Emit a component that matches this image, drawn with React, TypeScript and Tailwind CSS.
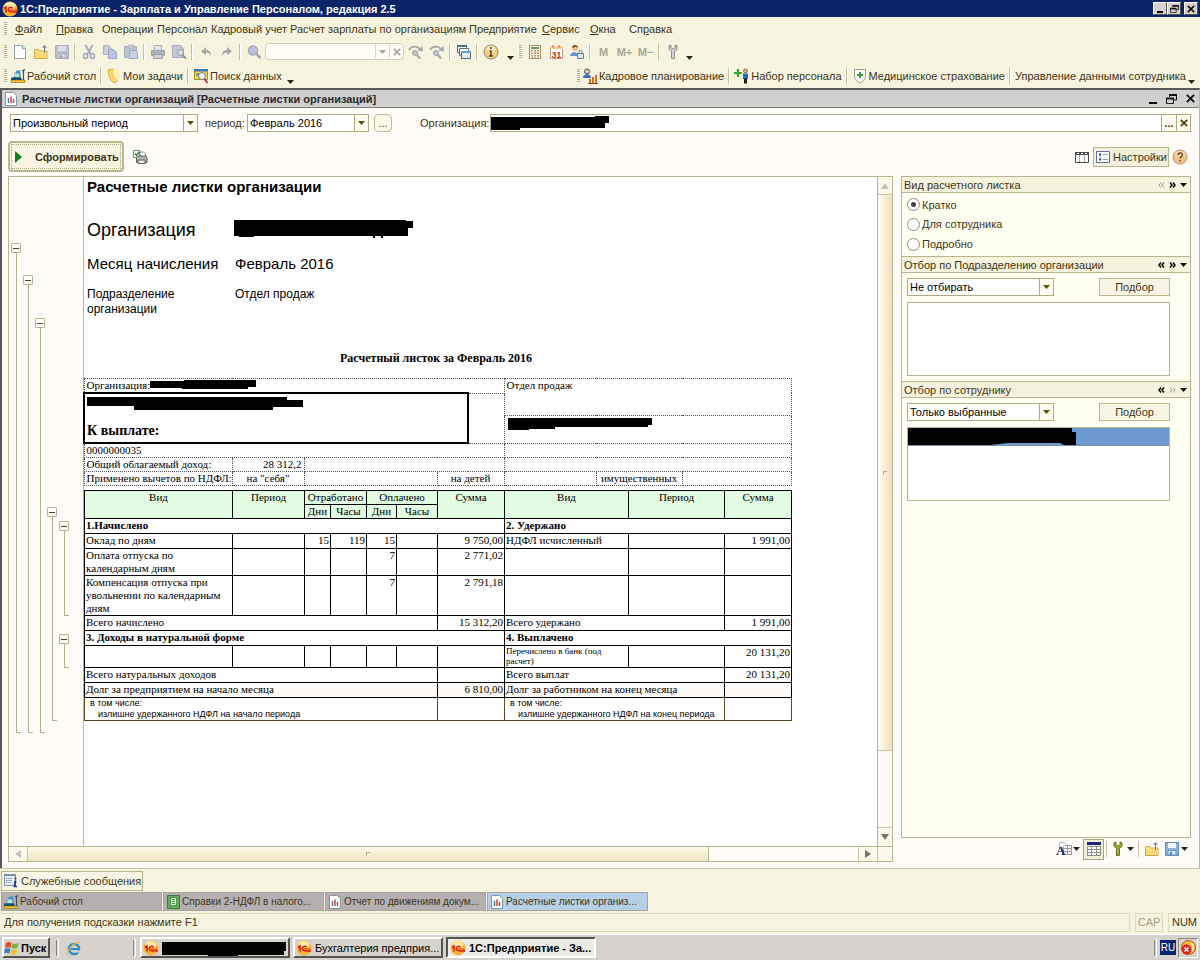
import type { ReactNode } from 'react'
import { useState } from 'react'

const UI = "font-['Liberation_Sans',sans-serif] text-[11px] leading-[14px]"

/* ---------- Small drawings ---------- */

function Svg({ children, w = 16, h = 16 }: { children: ReactNode; w?: number; h?: number }) {
  return (
    <svg width={w} height={h} viewBox={`0 0 ${w} ${h}`} fill="none" className="shrink-0" aria-hidden="true">
      {children}
    </svg>
  )
}

const Logo1C = () => (
  <Svg>
    <circle cx="8" cy="8" r="7.5" fill="#fbb03a" />
    <ellipse cx="8" cy="4.5" rx="5.5" ry="3.5" fill="#ffe9a8" />
    <path d="M2 7.500 4 6v5.500" stroke="#d8230f" strokeWidth="1.600" />
    <path d="M10.500 7.200C9 5.600 6.300 6.300 6.300 8.600c0 2.400 2.200 2.400 4 2.400H15" stroke="#d8230f" strokeWidth="1.500" />
    <path d="M10.300 8.400c-.8-.7-2-.2-1.800.5.100.5.800.4 6.500.4" stroke="#d8230f" strokeWidth=".8" />
  </Svg>
)

const NewDoc = () => (
  <Svg>
    <path d="M2.500 1.500h8l3 3v10h-11z" fill="#fff" stroke="#8fa3b0" />
    <path d="M10.500 1.500v3h3" fill="#dfe9f2" stroke="#8fa3b0" />
  </Svg>
)

const OpenFolder = () => (
  <Svg>
    <path d="M1.500 5.500h4l1 1.500h7.500v7.500h-12.500z" fill="#fbe18a" stroke="#d2a84a" />
    <path d="M2 9h12v5H2z" fill="#f9d774" />
    <path d="M11.500 9V2M9.500 4l2-2.500 2 2.500" stroke="#6f7a86" />
  </Svg>
)

const Floppy = ({ dim }: { dim?: boolean }) => (
  <Svg>
    <path d="M1.500 1.500h13v13h-13z" fill={dim ? '#b9c1d2' : '#8cb3da'} stroke={dim ? '#aab2c2' : '#5f8cb8'} />
    <path d="M4 2h8v5H4z" fill={dim ? '#dcdfe3' : '#eef6fc'} />
    <path d="M4 9.500h8V14H4z" fill={dim ? '#cfd5de' : '#d6e6f4'} stroke={dim ? '#a3acbd' : '#6991ba'} />
    <path d="M6 11h2v3H6z" fill={dim ? '#98a3b8' : '#4e7ba8'} />
  </Svg>
)

const Cut = () => (
  <Svg>
    <path d="M4.500 1 9.500 10M11.500 1 6.500 10" stroke="#a2aabc" strokeWidth="1.800" />
    <ellipse cx="4.500" cy="12" rx="2" ry="2.500" stroke="#a2aabc" strokeWidth="1.600" />
    <ellipse cx="11.500" cy="12" rx="2" ry="2.500" stroke="#a2aabc" strokeWidth="1.600" />
  </Svg>
)

const Copy = () => (
  <Svg>
    <path d="M1.500 1.500h5l3 3v6h-8z" fill="#c6cde0" stroke="#a8b0c6" />
    <path d="M6.500 5.500h5l3 3v6h-8z" fill="#bcc5dc" stroke="#9aa5c0" />
  </Svg>
)

const Paste = () => (
  <Svg>
    <path d="M1.500 2.500h12v11h-12z" fill="#bcc3cf" stroke="#a4acba" />
    <path d="M5 1h5v3H5z" fill="#d5d9df" stroke="#a4acba" />
    <path d="M6.500 6.500h6l2 2v6h-8z" fill="#c8d0e2" stroke="#a0a9be" />
  </Svg>
)

const Printer = () => (
  <Svg>
    <path d="M4.500 1.500h7v5h-7z" fill="#e7e7e7" stroke="#a9abb2" />
    <path d="M1.500 6.500h13v5h-13z" fill="#b0b3bb" stroke="#9c9fa6" />
    <path d="M3.500 10.500h9v4h-9z" fill="#d0d2d6" stroke="#9c9fa6" />
  </Svg>
)

const Preview = () => (
  <Svg>
    <path d="M1.500 1.500h8l3 3v9h-11z" fill="#c4c9d6" stroke="#a3a9b8" />
    <circle cx="9.500" cy="8.500" r="3" fill="#d9dde8" stroke="#8d94a6" />
    <path d="m11.500 11 3.500 3.500" stroke="#8d94a6" strokeWidth="1.800" />
  </Svg>
)

const Arrow = ({ flip }: { flip?: boolean }) => (
  <Svg>
    <path
      d={flip ? 'M3 12c0-4 2-6 5-6V3l5 4.500L8 11V8.500C6 8.500 4 9.500 3 12z' : 'M13 12c0-4-2-6-5-6V3L3 7.500 8 11V8.500c2 0 4 1 5 3.500z'}
      fill="#a3a6a4"
    />
  </Svg>
)

const Lens = () => (
  <Svg>
    <circle cx="7" cy="6.500" r="4.500" fill="#b9c2da" stroke="#a4a9b8" strokeWidth="1.500" />
    <path d="m10.500 10 4 4" stroke="#aaa8a8" strokeWidth="2.500" />
  </Svg>
)

// curved arrow over a magnifier
const FindNext = () => (
  <Svg>
    <path d="M1 6c2.500-4.500 8.500-4.500 11.500 0" stroke="#a8abab" strokeWidth="1.800" />
    <path d="m9.500 6.500 5.500 1-.5-5.500z" fill="#a8abab" />
    <circle cx="7" cy="9" r="2.500" fill="#c1c6d0" stroke="#a0a4ad" />
    <path d="m9 11 3 3.500" stroke="#a0a4ad" strokeWidth="2" />
  </Svg>
)

const Windows = () => (
  <Svg>
    <path d="M1.500 1.500h9v7h-9z" fill="#fff" stroke="#4c7184" />
    <path d="M1 1h10v2H1z" fill="#4c7184" />
    <path d="M3.500 4.500h9v7h-9z" fill="#fff" stroke="#4c7184" />
    <path d="M5.500 7.500h9v7h-9z" fill="#d7ecf7" stroke="#4c7184" />
    <path d="M5 7h10v2H5z" fill="#6ba4c2" />
  </Svg>
)

const Info = () => (
  <Svg>
    <circle cx="8" cy="8" r="7" fill="#f3cf78" stroke="#8d8a80" />
    <ellipse cx="8" cy="5" rx="4.500" ry="3" fill="#fbe9b4" />
    <path d="M8 3v2M6.500 7H8v5M6 12h4" stroke="#4b4a44" strokeWidth="1.500" />
  </Svg>
)

const Calc = () => (
  <Svg>
    <path d="M2.500 1.500h11v13h-11z" fill="#fdf6df" stroke="#a88c63" />
    <path d="M4 3h8v2H4z" fill="#5da05b" />
    <path d="M5 6v8M8 6v8" stroke="#8e7f6a" strokeWidth="1.500" strokeDasharray="1.500 1" />
    <path d="M11 6v8" stroke="#c75b3f" strokeWidth="1.500" strokeDasharray="1.500 1" />
  </Svg>
)

const Calendar = () => (
  <Svg>
    <path d="M2.500 2.500h12v12h-12z" fill="#fff" stroke="#b5a183" />
    <path d="M2 2h13v3H2z" fill="#eccf9f" />
    <path d="M5 1v3M11 1v3" stroke="#d06a44" />
    <text x="3.500" y="13.500" fontSize="9" fontWeight="700" fontFamily="Liberation Sans" fill="#d2331d">31</text>
  </Svg>
)

const UserLock = () => (
  <Svg>
    <circle cx="6" cy="4" r="3" fill="#eebd8d" />
    <path d="M3 4c0-4 6-4 6 0L7 2.500z" fill="#7c4a25" />
    <path d="M1 12c0-5 9-5 9 0z" fill="#5f93c9" />
    <path d="M8.500 9.500h6v5h-6z" fill="#dbe7f2" stroke="#5a7d9e" />
    <path d="M10 9V7.500c0-1.500 3-1.500 3 0V9" stroke="#5a7d9e" />
  </Svg>
)

const Wrench = ({ green }: { green?: boolean }) => (
  <Svg>
    <path
      d="M4 1.500v4L6.500 7v7.500h3V7L12 5.500v-4L10 1v3L8 5 6 4V1z"
      fill={green ? '#a3ad3c' : '#d4d4d4'}
      stroke={green ? '#6c7524' : '#8f9092'}
    />
  </Svg>
)

const Desk = () => (
  <Svg>
    <path d="M1 12h14v2.500H1z" fill="#f2c230" stroke="#8a6a1a" strokeWidth=".6" />
    <path d="m6 3 4-1 1 8H3z" fill="#3b93c4" />
    <path d="M1 9.500h10l1 2.500H1z" fill="#1c4d6c" />
    <path d="M5 5.500h4l.5 3.500H4z" fill="#bfe3d0" />
    <path d="M13.500 2v10M12 3l3-1.500" stroke="#3d4c59" strokeWidth="1.200" />
  </Svg>
)

const Note = () => (
  <Svg>
    <path d="m2.500 1.500 5-.5c-1 5 0 8 4.500 12l-4 2C3.500 12 2 7 2.500 1.500z" fill="#fbd867" stroke="#caa13a" strokeWidth=".7" />
    <path d="m7.500 1 6 .5c-1 4-.5 7 .5 10.500l-2 1C7.500 9 6.500 6 7.500 1z" fill="#fff0b0" />
  </Svg>
)

const SearchData = () => (
  <Svg>
    <path d="M1.500 1.500h13v10h-13z" fill="#f8d44a" stroke="#b58a1f" />
    <path d="M1 1h14v2.500H1z" fill="#3b79b9" />
    <path d="M3 5h4v3H3z" fill="#6db055" />
    <circle cx="9" cy="8" r="3.500" fill="#e8f4fb" stroke="#5c87a8" />
    <path d="m11.500 11 3 4" stroke="#c4372c" strokeWidth="2" />
  </Svg>
)

const StaffPlan = () => (
  <Svg>
    <circle cx="5" cy="3.500" r="2.500" fill="#f1c9a4" stroke="#2c4a7e" />
    <path d="M1 10c0-5 8-5 8 0z" fill="#3f6dba" />
    <path d="M7 15v-4h2v4zM10 15V9h2v6zM13 15V7h2v8z" fill="#e2711d" />
    <path d="M6 15.500h10" stroke="#8d3d0f" />
  </Svg>
)

const Recruit = () => (
  <Svg>
    <path d="M4 1v8M0 5h8" stroke="#35a52b" strokeWidth="2.200" />
    <circle cx="11.500" cy="3" r="2" fill="#e7b58c" stroke="#503013" strokeWidth=".6" />
    <path d="M9 5.500h5V11H9z" fill="#2169c9" />
    <path d="M10 10.500h3v5h-3z" fill="#2d1a12" />
  </Svg>
)

const Shield = () => (
  <Svg>
    <path d="M2.500 1.500h11V8c0 4-3 5.500-5.500 7C5.500 13.500 2.500 12 2.500 8z" fill="#f8fbf4" stroke="#9aa692" />
    <path d="M8 4v6M5 7h6" stroke="#3a9a3f" strokeWidth="2" />
  </Svg>
)

const Report = () => (
  <Svg>
    <path d="M2.500 1.500h8l3 3v10h-11z" fill="#fff" stroke="#7f97ad" />
    <path d="M5.500 12V7" stroke="#3f7fbf" strokeWidth="1.500" />
    <path d="M8 12V5.500" stroke="#cf4028" strokeWidth="1.500" />
    <path d="M10.500 12V8" stroke="#cf4028" strokeWidth="1.500" />
  </Svg>
)

const Book = () => (
  <Svg>
    <path d="M2.500 1.500h12v13h-12z" fill="#5fae55" stroke="#39783a" />
    <path d="M5.500 3.500h6v8h-6z" fill="#d9efcf" stroke="#39783a" strokeWidth=".7" />
    <path d="M7 5.500h3M7 7.500h3M7 9.500h3" stroke="#4a9346" />
  </Svg>
)

const PrintCheck = () => (
  <Svg>
    <path d="M1.500 1.500h6v7h-6z" fill="#fff" stroke="#5a9a5a" />
    <path d="m3 4.500 1.500 2L7 3" stroke="#1d8a2b" strokeWidth="1.300" />
    <path d="M8 3h3.500l2 2v3H8z" fill="#fff" stroke="#8a8a8a" />
    <path d="M4.500 8.500 6 7h8l1 2v4.500H4.500z" fill="#b5b5b5" stroke="#5e5e5e" />
    <path d="M6 11h7v3.500H6z" fill="#ececec" stroke="#5e5e5e" />
    <path d="M12 9.500h2" stroke="#c9a93a" />
  </Svg>
)

const GridIcon = () => (
  <Svg>
    <path d="M1.500 3.500h13v10h-13z" fill="#fff" stroke="#4a4a4a" />
    <path d="M1 3h14v3H1z" fill="#4a4a4a" />
    <path d="M3 4.500h2M7 4.500h2M11 4.500h2" stroke="#fff" />
    <path d="M5.500 6v7M10.500 6v7" stroke="#a9a9a9" />
  </Svg>
)

const Settings = () => (
  <Svg>
    <path d="M1.500 2.500h13v11h-13z" fill="#fff" stroke="#5f6f9c" />
    <path d="M4 5.500h2M4 10.500h2" stroke="#223c9c" strokeWidth="2" />
    <path d="M7.500 5.500H13M7.500 10.500H13M5 6v4" stroke="#8fa0c8" />
  </Svg>
)

const Help = () => (
  <Svg>
    <circle cx="8" cy="8" r="7" fill="#f6c089" stroke="#b59678" />
    <ellipse cx="8" cy="5" rx="5" ry="3" fill="#fde3c4" />
    <path d="M5.800 6.200c0-3 4.600-2.800 4.600-.2C10.400 7.600 8 7.700 8 9.500M8 11v1.700" stroke="#7b3d17" strokeWidth="1.400" />
  </Svg>
)

const FontTable = () => (
  <Svg>
    <path d="M7.500 4.500h8v9h-8z" fill="#fff" stroke="#9a9a9a" />
    <path d="M7.500 7.500h8M7.500 10.500h8M11.500 4.500v9" stroke="#9a9a9a" />
    <path d="M3.500 8V1.500h5l2 2" fill="#fff" stroke="#b9b9b9" />
    <text x="0" y="14" fontSize="13" fontWeight="700" fontFamily="Liberation Serif" fill="#10226f">A</text>
  </Svg>
)

const TableIcon = () => (
  <Svg>
    <path d="M1 1h14v3H1z" fill="#1b2a7c" />
    <path d="M1.500 5.500h13v9h-13z" fill="#fff" stroke="#8c8c86" />
    <path d="M1.500 8.500h13M1.500 11.500h13M5.500 5.500v9M10.500 5.500v9" stroke="#8c8c86" />
  </Svg>
)

const Messages = () => (
  <Svg>
    <path d="M1.500 1.500h11v11h-11z" fill="#e9f0f7" stroke="#7d93aa" />
    <path d="M1 1h12v2H1z" fill="#7d93aa" />
    <path d="M3 5.500h6M3 7.500h6M3 9.500h5" stroke="#9bb0c6" />
    <path d="M12.500 4.500v2M11 8.500h1.500l-1 5h2.500" stroke="#22359a" strokeWidth="1.700" />
  </Svg>
)

const Flag = () => (
  <Svg>
    <path d="M2 3c2-1.500 4-1 5.500 0L6.500 8C5 7 3 7 1 8z" fill="#e4502a" />
    <path d="M8.500 3.300c2 1 3.500 1 6-.3l-1 5c-2.500 1-4 1-6 0z" fill="#7db33c" />
    <path d="M.8 9c2-1 4-1 5.500 0l-1 4.500c-2-1-3.500-1-5.300 0z" fill="#3d77cf" />
    <path d="M7.300 9.300c2 1 3.500 1 6 0l-1 4.700c-2 1-4 1-6 0z" fill="#f4c22d" />
  </Svg>
)

const Explorer = () => (
  <Svg>
    <circle cx="8" cy="9" r="5" stroke="#2e8fd6" strokeWidth="2.600" />
    <path d="M4 9h9" stroke="#2e8fd6" strokeWidth="2" />
    <path d="M9 10.500h6v2H9z" fill="#d6d3ce" />
    <path d="M2 14.500C-1 12 8 1.500 14.500 2.500" stroke="#edb72c" strokeWidth="1.400" />
  </Svg>
)

const TrayAlert = () => (
  <Svg>
    <circle cx="8.500" cy="7.500" r="7" fill="#f6b83a" stroke="#c8452a" />
    <path d="M11 3a6 6 0 0 1 1 8" stroke="#fff3b5" strokeWidth="2" />
    <circle cx="6.500" cy="9.500" r="5" fill="#dd2518" />
    <path d="m4.500 7.500 4 4M8.500 7.500l-4 4" stroke="#fff" strokeWidth="1.500" />
  </Svg>
)

const Down = ({ color = '#2d2510' }: { color?: string }) => (
  <Svg w={7} h={4}>
    <path d="M0 0h7L3.500 4z" fill={color} />
  </Svg>
)

const Chevrons = ({ flip, dim }: { flip?: boolean; dim?: boolean }) => (
  <Svg w={7} h={6}>
    <path
      d={flip ? 'm1 .5 2 2.500-2 2.500M4 .5 6 3 4 5.500' : 'M3 .5 1 3l2 2.500M6 .5 4 3l2 2.500'}
      stroke={dim ? '#9c9a86' : '#111'}
      strokeWidth={dim ? 1 : 1.6}
    />
  </Svg>
)

const Cross = ({ color = '#111', size = 8 }: { color?: string; size?: number }) => (
  <svg width={size} height={size} viewBox="0 0 8 8" aria-hidden="true">
    <path d="m.8.8 6.400 6.400M7.200.8.8 7.200" stroke={color} strokeWidth="1.700" />
  </svg>
)

const Restore = ({ small }: { small?: boolean }) => (
  <svg width={small ? 9 : 11} height={small ? 8 : 10} viewBox="0 0 11 10" fill="none" className="shrink-0" aria-hidden="true">
    <path d="M3.500 3V1h7v5H8" stroke="#111" />
    <path d="M3 1h8" stroke="#111" strokeWidth="2" />
    <path d="M.5 4.500h7v5h-7z" stroke="#111" />
    <path d="M0 4.500h8" stroke="#111" strokeWidth="2" />
  </svg>
)

/* painted-over text */
function Redacted({ w, h, d }: { w: number; h: number; d: string }) {
  return (
    <Svg w={w} h={h}>
      <path d={d} fill="#000" />
    </Svg>
  )
}

/* ---------- Controls ---------- */

const Sep = () => <span className="mx-[2px] h-4 w-[2px] shrink-0 border-l border-[#c5c1a2] bg-white" />

const Grip = () => (
  <span className="h-3.5 w-[3px] shrink-0 bg-[repeating-linear-gradient(to_bottom,#b5b193_0_1px,transparent_1px_2px)]" />
)

function ToolButton({ label, children }: { label: string; children: ReactNode }) {
  return (
    <button type="button" aria-label={label} className="flex h-5 w-[21px] shrink-0 items-center justify-center font-bold text-[#a8a698]">
      {children}
    </button>
  )
}

function LinkButton({ icon, label }: { icon?: ReactNode; label: string }) {
  return (
    <button type="button" className="flex h-5 shrink-0 items-center gap-px px-[2px] whitespace-nowrap">
      {icon}
      {label}
    </button>
  )
}

function Combo({ label, value, className }: { label: string; value: string; className: string }) {
  return (
    <div className={`relative h-[18px] shrink-0 border border-[#b0ab83] bg-white ${className}`}>
      <select aria-label={label} className="block h-full w-full appearance-none bg-transparent pl-[2px] text-black outline-none">
        <option>{value}</option>
      </select>
      <span className="pointer-events-none absolute inset-y-0 right-0 flex w-[14px] items-center justify-center border-l border-[#b0ab83] bg-[#fffcf0]">
        <Down color="#5d4b12" />
      </span>
    </div>
  )
}

function Section({ title, back, next, children }: { title: string; back: boolean; next: boolean; children: ReactNode }) {
  return (
    <section>
      <header className="flex h-[16px] items-center border-b border-[#b9b591] bg-[#f5f2de] pr-[3px] pl-[2px]">
        <h2 className="grow">{title}</h2>
        <div className="flex items-center gap-[4px]">
          <button type="button" aria-label="Назад"><Chevrons dim={!back} /></button>
          <button type="button" aria-label="Вперед"><Chevrons flip dim={!next} /></button>
          <button type="button" aria-label="Меню"><Down color="#111" /></button>
        </div>
      </header>
      {children}
    </section>
  )
}

/* ---------- Data ---------- */

const menu = [
  { key: 'Ф', rest: 'айл', width: 'w-[41px]' },
  { key: 'П', rest: 'равка', width: 'w-[46px]' },
  { pre: 'Операции', width: 'w-[55px]' },
  { pre: 'Персонал', width: 'w-[54px]' },
  { pre: 'Кадровый учет', width: 'w-[79px]' },
  { pre: 'Расчет зарплаты по организациям', width: 'w-[179px]' },
  { pre: 'Предприятие', width: 'w-[73px]' },
  { key: 'С', rest: 'ервис', width: 'w-[48px]' },
  { key: 'О', rest: 'кна', width: 'w-[39px]' },
  { pre: 'Сп', key: 'р', rest: 'авка', width: 'w-[48px]' },
]

// outline levels at the left of the sheet
const outline = [
  { groups: [{ gap: 'h-[66px]', line: 'h-[480px]' }] },
  { groups: [{ gap: 'h-[98px]', line: 'h-[448px]' }] },
  { groups: [{ gap: 'h-[141px]', line: 'h-[405px]' }] },
  { groups: [{ gap: 'h-[330px]', line: 'h-[204px]' }] },
  { groups: [{ gap: 'h-[344px]', line: 'h-[85px]' }, { gap: 'h-[18px]', line: 'h-[24px]' }] },
]

const accruals = [
  { kind: 'Оклад по дням', worked: '15', hours: '119', paid: '15', sum: '9 750,00', held: 'НДФЛ исчисленный', heldSum: '1 991,00', height: 'h-[15px]' },
  { kind: 'Оплата отпуска по календарным дням', worked: '', hours: '', paid: '7', sum: '2 771,02', held: '', heldSum: '', height: 'h-[27px]' },
  { kind: 'Компенсация отпуска при увольнении по календарным дням', worked: '', hours: '', paid: '7', sum: '2 791,18', held: '', heldSum: '', height: 'h-[40px]' },
]

const windowTabs = [
  { icon: <Desk />, label: 'Рабочий стол' },
  { icon: <Book />, label: 'Справки 2-НДФЛ в налого...' },
  { icon: <Report />, label: 'Отчет по движениям докум...' },
  { icon: <Report />, label: 'Расчетные листки организ...' },
]

const payTypes = ['Кратко', 'Для сотрудника', 'Подробно']

/* ---------- Parts ---------- */

function TitleBar() {
  const box = 'flex h-[13px] w-[14px] items-center justify-center border border-t-white border-l-white border-r-[#55534f] border-b-[#55534f] bg-[#d6d3ce]'
  return (
    <header className="flex h-[17px] items-center bg-[#0a246a] pr-[2px] pl-[2px] text-white">
      <Logo1C />
      <h1 className="ml-[2px] grow font-bold">1С:Предприятие - Зарплата и Управление Персоналом, редакция 2.5</h1>
      <button type="button" aria-label="Свернуть" className={box}>
        <span className="mt-[6px] h-[2px] w-[6px] bg-black" />
      </button>
      <button type="button" aria-label="Восстановить" className={box}><Restore small /></button>
      <button type="button" aria-label="Закрыть" className={`ml-[3px] ${box}`}><Cross /></button>
    </header>
  )
}

function Toolbars() {
  return (
    <div className="bg-[#f6f3de]">
      <nav className="flex h-[23px] items-center pl-1">
        <Grip />
        <div className="flex pl-2">
          {menu.map((m) => (
            <button type="button" key={(m.pre ?? '') + (m.rest ?? '')} className={`shrink-0 text-left whitespace-nowrap ${m.width}`}>
              {m.pre}
              {m.key && <u>{m.key}</u>}
              {m.rest}
            </button>
          ))}
        </div>
      </nav>

      <div className="flex h-[23px] items-center pl-1">
        <Grip />
        <div className="flex items-center pl-[2px]">
          <ToolButton label="Новый"><NewDoc /></ToolButton>
          <ToolButton label="Открыть"><OpenFolder /></ToolButton>
          <ToolButton label="Сохранить"><Floppy dim /></ToolButton>
          <Sep />
          <ToolButton label="Вырезать"><Cut /></ToolButton>
          <ToolButton label="Копировать"><Copy /></ToolButton>
          <ToolButton label="Вставить"><Paste /></ToolButton>
          <Sep />
          <ToolButton label="Печать"><Printer /></ToolButton>
          <ToolButton label="Просмотр"><Preview /></ToolButton>
          <Sep />
          <ToolButton label="Отменить"><Arrow /></ToolButton>
          <ToolButton label="Вернуть"><Arrow flip /></ToolButton>
          <Sep />
          <ToolButton label="Найти"><Lens /></ToolButton>
          <div className="mx-[1px] flex h-[17px] w-[139px] rounded-sm border border-[#d2ceb2] bg-[#fffdf5]">
            <input aria-label="Поиск" className="min-w-0 grow bg-transparent px-1 outline-none" />
            <button type="button" aria-label="История поиска" className="flex w-[14px] shrink-0 items-center justify-center border-l border-[#dedbc4]">
              <Down color="#a8a593" />
            </button>
            <button type="button" aria-label="Очистить" className="flex w-[14px] shrink-0 items-center justify-center border-l border-[#dedbc4]">
              <Cross color="#a8a593" />
            </button>
          </div>
          <ToolButton label="Найти далее"><FindNext /></ToolButton>
          <ToolButton label="Найти ранее"><FindNext /></ToolButton>
          <Sep />
          <ToolButton label="Окна"><Windows /></ToolButton>
          <Sep />
          <ToolButton label="Справка"><Info /></ToolButton>
          <button type="button" aria-label="Еще" className="flex h-4 w-[18px] items-end justify-center"><Down /></button>
        </div>
        <Grip />
        <div className="flex items-center pl-[2px]">
          <ToolButton label="Калькулятор"><Calc /></ToolButton>
          <ToolButton label="Календарь"><Calendar /></ToolButton>
          <ToolButton label="Пользователи"><UserLock /></ToolButton>
          <Sep />
          <ToolButton label="Запомнить">M</ToolButton>
          <ToolButton label="Прибавить">M+</ToolButton>
          <ToolButton label="Вычесть">M−</ToolButton>
          <Sep />
          <ToolButton label="Сервис"><Wrench /></ToolButton>
          <button type="button" aria-label="Еще" className="flex h-4 w-[13px] items-end justify-center"><Down /></button>
        </div>
      </div>

      <div className="flex h-[25px] items-center pr-[5px] pl-1">
        <Grip />
        <div className="flex items-center pl-px">
          <LinkButton icon={<Desk />} label="Рабочий стол" />
          <Sep />
          <LinkButton icon={<Note />} label="Мои задачи" />
          <Sep />
          <LinkButton icon={<SearchData />} label="Поиск данных" />
          <button type="button" aria-label="Еще" className="flex h-4 w-[13px] items-end justify-center"><Down /></button>
        </div>
        <div className="ml-auto flex items-center">
          <Grip />
          <LinkButton icon={<StaffPlan />} label="Кадровое планирование" />
          <Sep />
          <LinkButton icon={<Recruit />} label="Набор персонала" />
          <Sep />
          <LinkButton icon={<Shield />} label="Медицинское страхование" />
          <Sep />
          <LinkButton label="Управление данными сотрудника" />
          <button type="button" aria-label="Еще" className="flex h-4 items-end"><Down /></button>
        </div>
      </div>
    </div>
  )
}

function Filters() {
  return (
    <div className="pr-[2px]">
      <div className="flex h-[18px] items-center">
        <Combo label="Вид периода" value="Произвольный период" className="ml-[2px] w-[188px]" />
        <span className="ml-[7px] w-[42px]">период:</span>
        <Combo label="Период" value="Февраль 2016" className="w-[122px]" />
        <button type="button" aria-label="Выбрать период" className="ml-[5px] h-[18px] w-[18px] rounded-sm border border-[#c0bb98] bg-[#fbf8ea]">...</button>
        <label htmlFor="org" className="ml-7 w-[70px]">Организация:</label>
        <div className="flex h-[18px] grow items-center border border-[#b0ab83] bg-white">
          <Redacted w={118} h={16} d="M0 2h104V1h14v7h-4v5H29v2H0z" />
          <input id="org" className="min-w-0 grow px-1 outline-none" />
          <button type="button" aria-label="Выбрать организацию" className="h-full w-[15px] border-l border-[#b0ab83] bg-[#fffcf0] font-bold">...</button>
          <button type="button" aria-label="Очистить" className="flex h-full w-[14px] items-center justify-center border-l border-[#b0ab83] bg-[#fffcf0]">
            <Cross color="#4d3f10" />
          </button>
        </div>
      </div>
      <div className="mt-[9px] flex h-[31px] items-center">
        <button type="button" className="flex h-[31px] w-[116px] items-center gap-[13px] rounded-sm border-2 border-[#bcb78f] bg-[#f7f4e2] pl-[5px] font-bold outline-1 -outline-offset-4 outline-dotted outline-[#a9a47c]">
          <Svg w={7} h={12}><path d="M0 0v12l7-6z" fill="#1d7d1d" /></Svg>
          Сформировать
        </button>
        <button type="button" aria-label="Печать" className="ml-2"><PrintCheck /></button>
        <button type="button" aria-label="Таблица" className="ml-auto"><GridIcon /></button>
        <button type="button" className="ml-[3px] flex h-5 w-[76px] items-center justify-center gap-[2px] border border-[#b9b48c] bg-[#f5f0dc]">
          <Settings />
          Настройки
        </button>
        <button type="button" aria-label="Справка" className="mx-[3px]"><Help /></button>
      </div>
    </div>
  )
}

function Outline() {
  return (
    <div className="flex w-[75px] shrink-0 gap-[2px] border-r border-[#b9b591] pl-[2px]">
      {outline.map((level, i) => (
        <div key={i} className="flex w-[10px] flex-col items-center">
          {level.groups.map((g) => (
            <div key={g.gap} className="flex flex-col items-center">
              <span className={g.gap} />
              <button type="button" aria-label="Свернуть группу" className="flex h-[10px] w-[10px] items-center justify-center rounded-[1px] border border-[#b5b193] bg-[#fffdf5]">
                <span className="h-px w-[6px] bg-[#4a4528]" />
              </button>
              <span className={`ml-[5px] w-[5px] border-b border-l border-[#b5b193] ${g.line}`} />
            </div>
          ))}
        </div>
      ))}
    </div>
  )
}

function HeaderTable() {
  return (
    <table className="-ml-px w-[708px] table-fixed border-collapse border border-dotted border-[#555] text-left [&_td]:border [&_td]:border-dotted [&_td]:border-[#555] [&_td]:px-[2px] [&_td]:align-top">
      <colgroup>
        <col className="w-[148px]" />
        <col className="w-[72px]" />
        <col className="w-[133px]" />
        <col className="w-[31px]" />
        <col className="w-[36px]" />
        <col className="w-[92px]" />
        <col className="w-[86px]" />
        <col className="w-[109px]" />
      </colgroup>
      <tbody>
        <tr className="h-[14px]">
          <td colSpan={5}>
            <div className="flex">
              Организация:
              <Redacted w={106} h={11} d="M0 2h34v-1h72v7h-8v2H32v-1H0z" />
            </div>
          </td>
          <td colSpan={3} rowSpan={2}>Отдел продаж</td>
        </tr>
        <tr className="h-[22px]">
          <td colSpan={4} rowSpan={2} className="border-2! border-solid! border-black!">
            <Redacted w={216} h={16} d="M0 3h200v3h16v7h-30v3H47v-4H0z" />
            <div className="mt-[12px] text-[14px] leading-[18px] font-bold">К выплате:</div>
          </td>
          <td rowSpan={2} />
        </tr>
        <tr className="h-[28px]">
          <td colSpan={3}>
            <Redacted w={146} h={14} d="M1 2h144v7h-4v2H48v2H22v2H1z" />
          </td>
        </tr>
        <tr className="h-[14px]">
          <td colSpan={5}>0000000035</td>
          <td colSpan={3} />
        </tr>
        <tr className="h-[14px]">
          <td>Общий облагаемый доход:</td>
          <td className="text-right">28 312,2</td>
          <td colSpan={3} />
          <td colSpan={3} />
        </tr>
        <tr className="h-[14px]">
          <td className="whitespace-nowrap">Применено вычетов по НДФЛ:</td>
          <td className="text-center">на "себя"</td>
          <td />
          <td colSpan={2} className="text-center">на детей</td>
          <td />
          <td className="text-center">имущественных</td>
          <td />
        </tr>
      </tbody>
    </table>
  )
}

function PayTable() {
  return (
    <table className="mt-[4px] w-[708px] table-fixed border-collapse border border-black text-left [&_td]:border [&_td]:border-black [&_td]:px-[1px] [&_td]:align-top [&_th]:border [&_th]:border-black [&_th]:bg-[#e2fce2] [&_th]:text-center [&_th]:align-top [&_th]:font-normal">
      <colgroup>
        <col className="w-[148px]" />
        <col className="w-[72px]" />
        <col className="w-[26px]" />
        <col className="w-[36px]" />
        <col className="w-[30px]" />
        <col className="w-[41px]" />
        <col className="w-[67px]" />
        <col className="w-[124px]" />
        <col className="w-[96px]" />
        <col className="w-[67px]" />
      </colgroup>
      <thead>
        <tr className="h-[14px]">
          <th rowSpan={2}>Вид</th>
          <th rowSpan={2}>Период</th>
          <th colSpan={2}>Отработано</th>
          <th colSpan={2}>Оплачено</th>
          <th rowSpan={2}>Сумма</th>
          <th rowSpan={2}>Вид</th>
          <th rowSpan={2}>Период</th>
          <th rowSpan={2}>Сумма</th>
        </tr>
        <tr className="h-[14px]">
          <th>Дни</th>
          <th>Часы</th>
          <th>Дни</th>
          <th>Часы</th>
        </tr>
      </thead>
      <tbody>
        <tr className="h-[15px] font-bold">
          <td colSpan={7}>1.Начислено</td>
          <td colSpan={3}>2. Удержано</td>
        </tr>
        {accruals.map((a) => (
          <tr key={a.kind} className={a.height}>
            <td>{a.kind}</td>
            <td />
            <td className="text-right">{a.worked}</td>
            <td className="text-right">{a.hours}</td>
            <td className="text-right">{a.paid}</td>
            <td />
            <td className="text-right">{a.sum}</td>
            <td>{a.held}</td>
            <td />
            <td className="text-right">{a.heldSum}</td>
          </tr>
        ))}
        <tr className="h-[15px]">
          <td colSpan={6}>Всего начислено</td>
          <td className="text-right">15 312,20</td>
          <td colSpan={2}>Всего удержано</td>
          <td className="text-right">1 991,00</td>
        </tr>
        <tr className="h-[15px] font-bold">
          <td colSpan={7}>3. Доходы в натуральной форме</td>
          <td colSpan={3}>4. Выплачено</td>
        </tr>
        <tr className="h-[22px]">
          <td />
          <td />
          <td />
          <td />
          <td />
          <td />
          <td />
          <td className="text-[9px] leading-[10px]">Перечислено в банк (под<br />расчет)</td>
          <td />
          <td className="text-right">20 131,20</td>
        </tr>
        <tr className="h-[15px]">
          <td colSpan={6}>Всего натуральных доходов</td>
          <td />
          <td colSpan={2}>Всего выплат</td>
          <td className="text-right">20 131,20</td>
        </tr>
        <tr className="h-[15px] bg-[#fcf9f6]">
          <td colSpan={6}>Долг за предприятием на начало месяца</td>
          <td className="text-right">6 810,00</td>
          <td colSpan={2}>Долг за работником на конец месяца</td>
          <td />
        </tr>
        <tr className="h-[23px] font-['Liberation_Sans',sans-serif] text-[9px] leading-[11px] [&_td]:border-[#5d4a20]!">
          <td colSpan={6}>
            <div className="pl-1">в том числе:</div>
            <div className="pl-3">излишне удержанного НДФЛ на начало периода</div>
          </td>
          <td />
          <td colSpan={2}>
            <div className="pl-1">в том числе:</div>
            <div className="pl-3">излишне удержанного НДФЛ на конец периода</div>
          </td>
          <td />
        </tr>
      </tbody>
    </table>
  )
}

function Sheet() {
  return (
    <div className="grow bg-white text-black">
      <div className="pl-[3px]">
        <h2 className="text-[15px] leading-[20px] font-bold">Расчетные листки организации</h2>
        <dl className="mt-[23px] grid grid-cols-[145px_1fr]">
          <dt className="text-[18px] leading-[20px]">Организация</dt>
          <dd className="pl-[2px]">
            <Redacted w={180} h={18} d="M0 0h172v1h7v7h-5v8h-25v2h-2v-2h-6v2h-2v-2H20v1H5v-1H0z" />
          </dd>
          <dt className="mt-[14px] text-[15px] leading-[20px]">Месяц начисления</dt>
          <dd className="mt-[14px] pl-[3px] text-[15px] leading-[20px]">Февраль 2016</dd>
          <dt className="mt-[13px] w-[100px] text-[12px] leading-[15px]">Подразделение организации</dt>
          <dd className="mt-[13px] pl-[3px] text-[12px] leading-[15px]">Отдел продаж</dd>
        </dl>
      </div>
      <div className="font-['Liberation_Serif',serif] text-[11px] leading-[13px]">
        <h3 className="mt-[33px] mb-[12px] w-[704px] text-center text-[12px] leading-[16px] font-bold">Расчетный листок за Февраль 2016</h3>
        <HeaderTable />
        <PayTable />
      </div>
    </div>
  )
}

function ScrollArrow({ d, label, className, dim }: { d: string; label: string; className: string; dim?: boolean }) {
  return (
    <button type="button" aria-label={label} className={`flex shrink-0 items-center justify-center border-[#c9c5a6] bg-[#fbf8ea] ${className}`}>
      <Svg w={8} h={8}><path d={d} fill={dim ? '#c3c1b4' : '#77756b'} /></Svg>
    </button>
  )
}

function Document() {
  return (
    <div className="flex min-w-0 grow flex-col border border-[#b9b591]">
      <div className="flex grow">
        <Outline />
        <Sheet />
        <div className="flex w-[15px] shrink-0 flex-col border-l border-[#b9b591] bg-[#fdfbf2]">
          <ScrollArrow d="M4 1 8 7H0z" label="Вверх" className="h-[18px] border-b" dim />
          <div className="flex grow flex-col">
            <div className="flex h-[88%] items-center justify-center border-b border-[#c9c5a6] bg-linear-to-r from-[#fffdf5] to-[#f3dfba]">
              <span className="h-1 w-1 border-t border-l border-[#b5b193]" />
            </div>
          </div>
          <ScrollArrow d="M0 1h8L4 7z" label="Вниз" className="h-[19px] border-t" />
        </div>
      </div>
      <div className="flex h-[15px] shrink-0 border-t border-[#b9b591] bg-[#fffcf8]">
        <ScrollArrow d="M1 4 7 0v8z" label="Влево" className="w-[19px] border-r" dim />
        <div className="flex grow">
          <div className="flex w-[82%] items-center justify-center border-r border-[#b9b591] bg-linear-to-b from-[#fbf8ea] to-[#efe5c0]">
            <span className="h-1 w-1 border-t border-l border-[#b5b193]" />
          </div>
        </div>
        <ScrollArrow d="M7 4 1 0v8z" label="Вправо" className="w-[19px] border-l" />
        <span className="w-[15px] border-l border-[#c9c5a6] bg-[#fbf8ea]" />
      </div>
    </div>
  )
}

function SidePanel() {
  const [type, setType] = useState('Кратко')
  const pick = 'h-[18px] w-[71px] border border-[#bdb88f] bg-[#f8f5e5]'

  return (
    <aside className="flex w-[290px] shrink-0 flex-col">
      <div className="grow border border-[#b9b591] bg-[#fffff2]">
        <Section title="Вид расчетного листка" back={false} next>
          <div className="flex h-[64px] flex-col justify-around border-b border-[#b9b591] py-[2px] pl-[5px]">
            {payTypes.map((t) => (
              <label key={t} className="flex items-center gap-[2px]">
                <input
                  type="radio"
                  name="payType"
                  checked={type === t}
                  onChange={() => setType(t)}
                  className="h-[13px] w-[13px] appearance-none rounded-full border border-[#8d8b80] bg-white checked:bg-[radial-gradient(#444_0_2px,#fff_3px)]"
                />
                {t}
              </label>
            ))}
          </div>
        </Section>
        <Section title="Отбор по Подразделению организации" back next>
          <div className="border-b border-[#b9b591] px-[5px] py-[5px]">
            <div className="flex">
              <Combo label="Отбор по подразделению" value="Не отбирать" className="w-[147px]" />
              <button type="button" className={`ml-[45px] ${pick}`}>Подбор</button>
            </div>
            <div className="mt-[6px] h-[74px] w-[263px] border border-[#b9b591] bg-white" />
          </div>
        </Section>
        <Section title="Отбор по сотруднику" back next={false}>
          <div className="px-[5px] py-[5px]">
            <div className="flex">
              <Combo label="Отбор по сотруднику" value="Только выбранные" className="w-[147px]" />
              <button type="button" className={`ml-[45px] ${pick}`}>Подбор</button>
            </div>
            <div className="mt-[6px] h-[74px] w-[263px] border border-[#b9b591] bg-white">
              <div className="h-[18px] border-b border-[#7a93a8] bg-[#6b99d0]">
                <Redacted w={168} h={17} d="M0 0h164v4h4v13h-12l-4-2h-52l-18 2H0z" />
              </div>
            </div>
          </div>
        </Section>
      </div>
      <div className="mb-[2px] flex h-[22px] items-center justify-end pr-[3px]">
        <button type="button" aria-label="Шрифт" className="flex items-center gap-[1px]"><FontTable /><Down /></button>
        <button type="button" aria-label="Настройка таблицы" className="ml-[3px] flex h-[21px] w-[21px] items-center justify-center border border-[#a9a47c] bg-[#f3eed8]"><TableIcon /></button>
        <Sep />
        <button type="button" aria-label="Сервис" className="mr-[2px] flex items-center gap-[1px]"><Wrench green /><Down /></button>
        <Sep />
        <button type="button" aria-label="Открыть" className="ml-[2px]"><OpenFolder /></button>
        <button type="button" aria-label="Сохранить" className="ml-[4px] flex items-center gap-[1px]"><Floppy /><Down /></button>
      </div>
    </aside>
  )
}

function ReportWindow() {
  return (
    <main className="flex grow flex-col border-t-2 border-r border-l-2 border-t-[#5a5a5a] border-r-[#b5b5b5] border-l-[#5a5a5a] bg-[#fffcf8]">
      <header className="flex h-[18px] items-center border-b border-[#7d7d7d] bg-[#d0d0d0] pr-[4px] pl-[1px]">
        <Report />
        <h2 className="ml-[3px] grow font-bold text-[#2a2a2a]">Расчетные листки организаций [Расчетные листки организаций]</h2>
        <div className="flex items-center gap-[9px]">
          <button type="button" aria-label="Свернуть" className="flex h-[10px] w-[8px] items-end"><span className="h-[2px] w-[8px] bg-black" /></button>
          <button type="button" aria-label="Восстановить"><Restore /></button>
          <button type="button" aria-label="Закрыть"><Cross size={9} /></button>
        </div>
      </header>
      <div className="flex grow flex-col px-[6px] pt-[6px] pb-[6px]">
        <Filters />
        <div className="mt-[4px] flex grow gap-2 pr-[2px]">
          <Document />
          <SidePanel />
        </div>
      </div>
    </main>
  )
}

function BottomBars() {
  return (
    <div className="border-t border-[#c9c5a6] bg-[#f6f3de]">
      <div className="flex h-[23px] items-center pl-[1px]">
        <button type="button" className="flex h-5 items-center gap-[2px] border border-[#b9b48c] bg-[#f9f6e6] px-[1px] whitespace-nowrap">
          <Messages />
          Служебные сообщения
        </button>
      </div>
      <div className="flex gap-px pl-px text-[10px]">
        {windowTabs.map((t, i) => (
          <button
            type="button"
            key={t.label}
            className={`flex h-[19px] w-[161px] items-center gap-[1px] border border-[#a9a49a] pl-[1px] whitespace-nowrap ${i === 3 ? 'bg-[#b5cfe6]' : 'bg-[#b5afb1]'}`}
          >
            {t.icon}
            {t.label}
          </button>
        ))}
      </div>
      <footer className="flex h-[23px] gap-[5px] py-[2px]">
        <div className="grow border border-l-0 border-[#dfdbc0] pl-[4px] leading-[17px]">Для получения подсказки нажмите F1</div>
        <div className="w-[28px] border border-[#dfdbc0] text-center leading-[17px] text-[#a39f80]">CAP</div>
        <div className="w-[32px] border border-r-0 border-[#dfdbc0] text-center leading-[17px]">NUM</div>
      </footer>
    </div>
  )
}

function Taskbar() {
  const raised = 'border-2 border-t-white border-l-white border-r-[#55534f] border-b-[#55534f]'
  const line = 'h-[18px] w-[3px] shrink-0 border border-t-white border-l-[#8d8a84] border-r-white border-b-white'
  return (
    <nav className="flex h-[26px] items-center border-t border-white bg-[#d6d3ce] px-[2px] text-black">
      <button type="button" className={`flex h-[21px] w-[48px] items-center gap-[1px] font-bold ${raised}`}>
        <Flag />
        Пуск
      </button>
      <span className={`ml-[6px] ${line}`} />
      <button type="button" aria-label="Internet Explorer" className="ml-[7px]"><Explorer /></button>
      <span className={`mr-[4px] ml-[51px] ${line}`} />
      <div className="flex gap-[3px]">
        <button type="button" aria-label="1С" className={`flex h-[21px] w-[150px] items-center gap-[3px] pl-[1px] ${raised}`}>
          <Logo1C />
          <Redacted w={124} h={16} d="M0 2h124v9h-2v4H76v1H46v-1H0z" />
        </button>
        <button type="button" className={`flex h-[21px] w-[150px] items-center gap-[3px] pl-[1px] whitespace-nowrap ${raised}`}>
          <Logo1C />
          Бухгалтерия предприя...
        </button>
        <button type="button" className="flex h-[21px] w-[150px] items-center gap-[3px] border-2 border-t-[#55534f] border-r-white border-b-white border-l-[#55534f] bg-[#ecebe8] pl-[2px] font-bold whitespace-nowrap">
          <Logo1C />
          1С:Предприятие - За...
        </button>
      </div>
      <span className={`ml-auto ${line}`} />
      <span className="ml-[3px] h-[15px] w-[16px] bg-[#0a246a] text-center text-[10px] leading-[15px] text-white">RU</span>
      <span className="ml-[2px] flex h-[20px] w-[20px] items-center justify-center border border-t-[#8d8a84] border-r-white border-b-white border-l-[#8d8a84]">
        <TrayAlert />
      </span>
    </nav>
  )
}

export default function App() {
  return (
    <div className={`flex min-h-screen flex-col bg-[#f6f3de] text-[#3f3516] ${UI}`}>
      <TitleBar />
      <Toolbars />
      <ReportWindow />
      <BottomBars />
      <Taskbar />
    </div>
  )
}
